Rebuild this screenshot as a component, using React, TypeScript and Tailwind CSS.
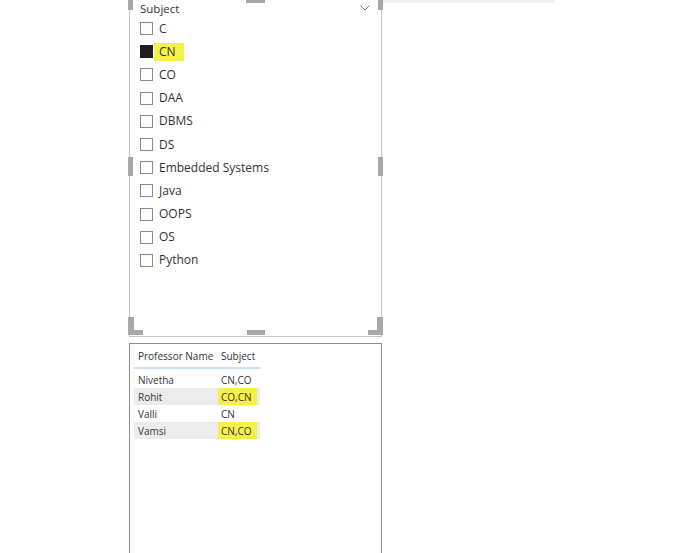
import React from "react";

const items = ["C", "CN", "CO", "DAA", "DBMS", "DS", "Embedded Systems", "Java", "OOPS", "OS", "Python"];

const rows = [
  { name: "Nivetha", subj: "CN,CO", band: false, hl: false },
  { name: "Rohit", subj: "CO,CN", band: true, hl: true },
  { name: "Valli", subj: "CN", band: false, hl: false },
  { name: "Vamsi", subj: "CN,CO", band: true, hl: true },
];

export default function App() {
  return (
    <div
      className="w-[680px] h-[553px] bg-white overflow-hidden flex flex-row text-[#333333]"
      style={{ fontFamily: '"Open Sans", "Noto Sans", sans-serif' }}
    >
      <div className="w-[129px] shrink-0" />
      <div className="w-[253px] shrink-0 flex flex-col">
        {/* Slicer */}
        <div className="relative h-[337px] border-x border-b border-[#c4c4c4] pl-[10px] pr-[10px]">
          <div className="h-[17px] flex items-center justify-between text-[11.5px] leading-none">
            <span>Subject</span>
            <svg width="10" height="6" viewBox="0 0 10 6" className="mr-[1px] -mt-[2px]">
              <path d="M0.5 0.5 L5 5 L9.5 0.5" fill="none" stroke="#777" strokeWidth="1" />
            </svg>
          </div>
          <div className="flex flex-col">
            {items.map((it) => {
              const checked = it === "CN";
              return (
                <div key={it} className="h-[23.2px] flex items-center text-[12px]">
                  <div
                    className={
                      checked
                        ? "w-[13px] h-[13px] bg-[#1e1e1e] shrink-0"
                        : "w-[13px] h-[13px] border border-[#8a8a8a] bg-white shrink-0"
                    }
                  />
                  {checked ? (
                    <span className="ml-[1px] h-[18px] w-[30px] bg-[#f6f04a] pl-[5px] flex items-center">{it}</span>
                  ) : (
                    <span className="ml-[6px]">{it}</span>
                  )}
                </div>
              );
            })}
          </div>
          {/* resize handles */}
          <div className="absolute left-[-2px] top-0 w-[5px] h-[10px] bg-[#a8a8a8]" />
          <div className="absolute left-[116px] top-0 w-[19px] h-[3px] bg-[#a8a8a8]" />
          <div className="absolute right-[-2px] top-0 w-[5px] h-[10px] bg-[#a8a8a8]" />
          <div className="absolute left-[-2px] top-[157px] w-[5px] h-[19px] bg-[#a8a8a8]" />
          <div className="absolute right-[-2px] top-[157px] w-[5px] h-[19px] bg-[#a8a8a8]" />
          <div className="absolute left-[-2px] bottom-[1px] w-[6px] h-[18px] bg-[#a8a8a8]" />
          <div className="absolute left-[-2px] bottom-[1px] w-[15px] h-[5px] bg-[#a8a8a8]" />
          <div className="absolute right-[-2px] bottom-[1px] w-[6px] h-[18px] bg-[#a8a8a8]" />
          <div className="absolute right-[-2px] bottom-[1px] w-[15px] h-[5px] bg-[#a8a8a8]" />
          <div className="absolute left-[117px] bottom-[1px] w-[18px] h-[5px] bg-[#a8a8a8]" />
        </div>
        <div className="h-[6px]" />
        {/* Table */}
        <div className="flex-1 border-x border-t border-[#8c8c8c] pl-[4px]">
          <div className="w-[126px] text-[10px] leading-none whitespace-nowrap">
            <div className="h-[25px] flex items-center border-b-2 border-[#cfdff0]">
              <div className="w-[83px] pl-[4px]">Professor Name</div>
              <div className="pl-[4px]">Subject</div>
            </div>
            <div className="pt-[2px]">
              {rows.map((r) => (
                <div
                  key={r.name}
                  className={r.band ? "h-[17px] flex items-center bg-[#ececec]" : "h-[17px] flex items-center"}
                >
                  <div className="w-[84px] pl-[4px]">{r.name}</div>
                  <div
                    className={
                      r.hl
                        ? "h-[17px] w-[39px] bg-[#f6f04a] pl-[3px] flex items-center"
                        : "h-[17px] w-[39px] pl-[3px] flex items-center"
                    }
                  >
                    {r.subj}
                  </div>
                </div>
              ))}
            </div>
          </div>
        </div>
      </div>
      <div className="w-[173px] h-[3px] bg-[#f2f2f2] shrink-0" />
    </div>
  );
}
